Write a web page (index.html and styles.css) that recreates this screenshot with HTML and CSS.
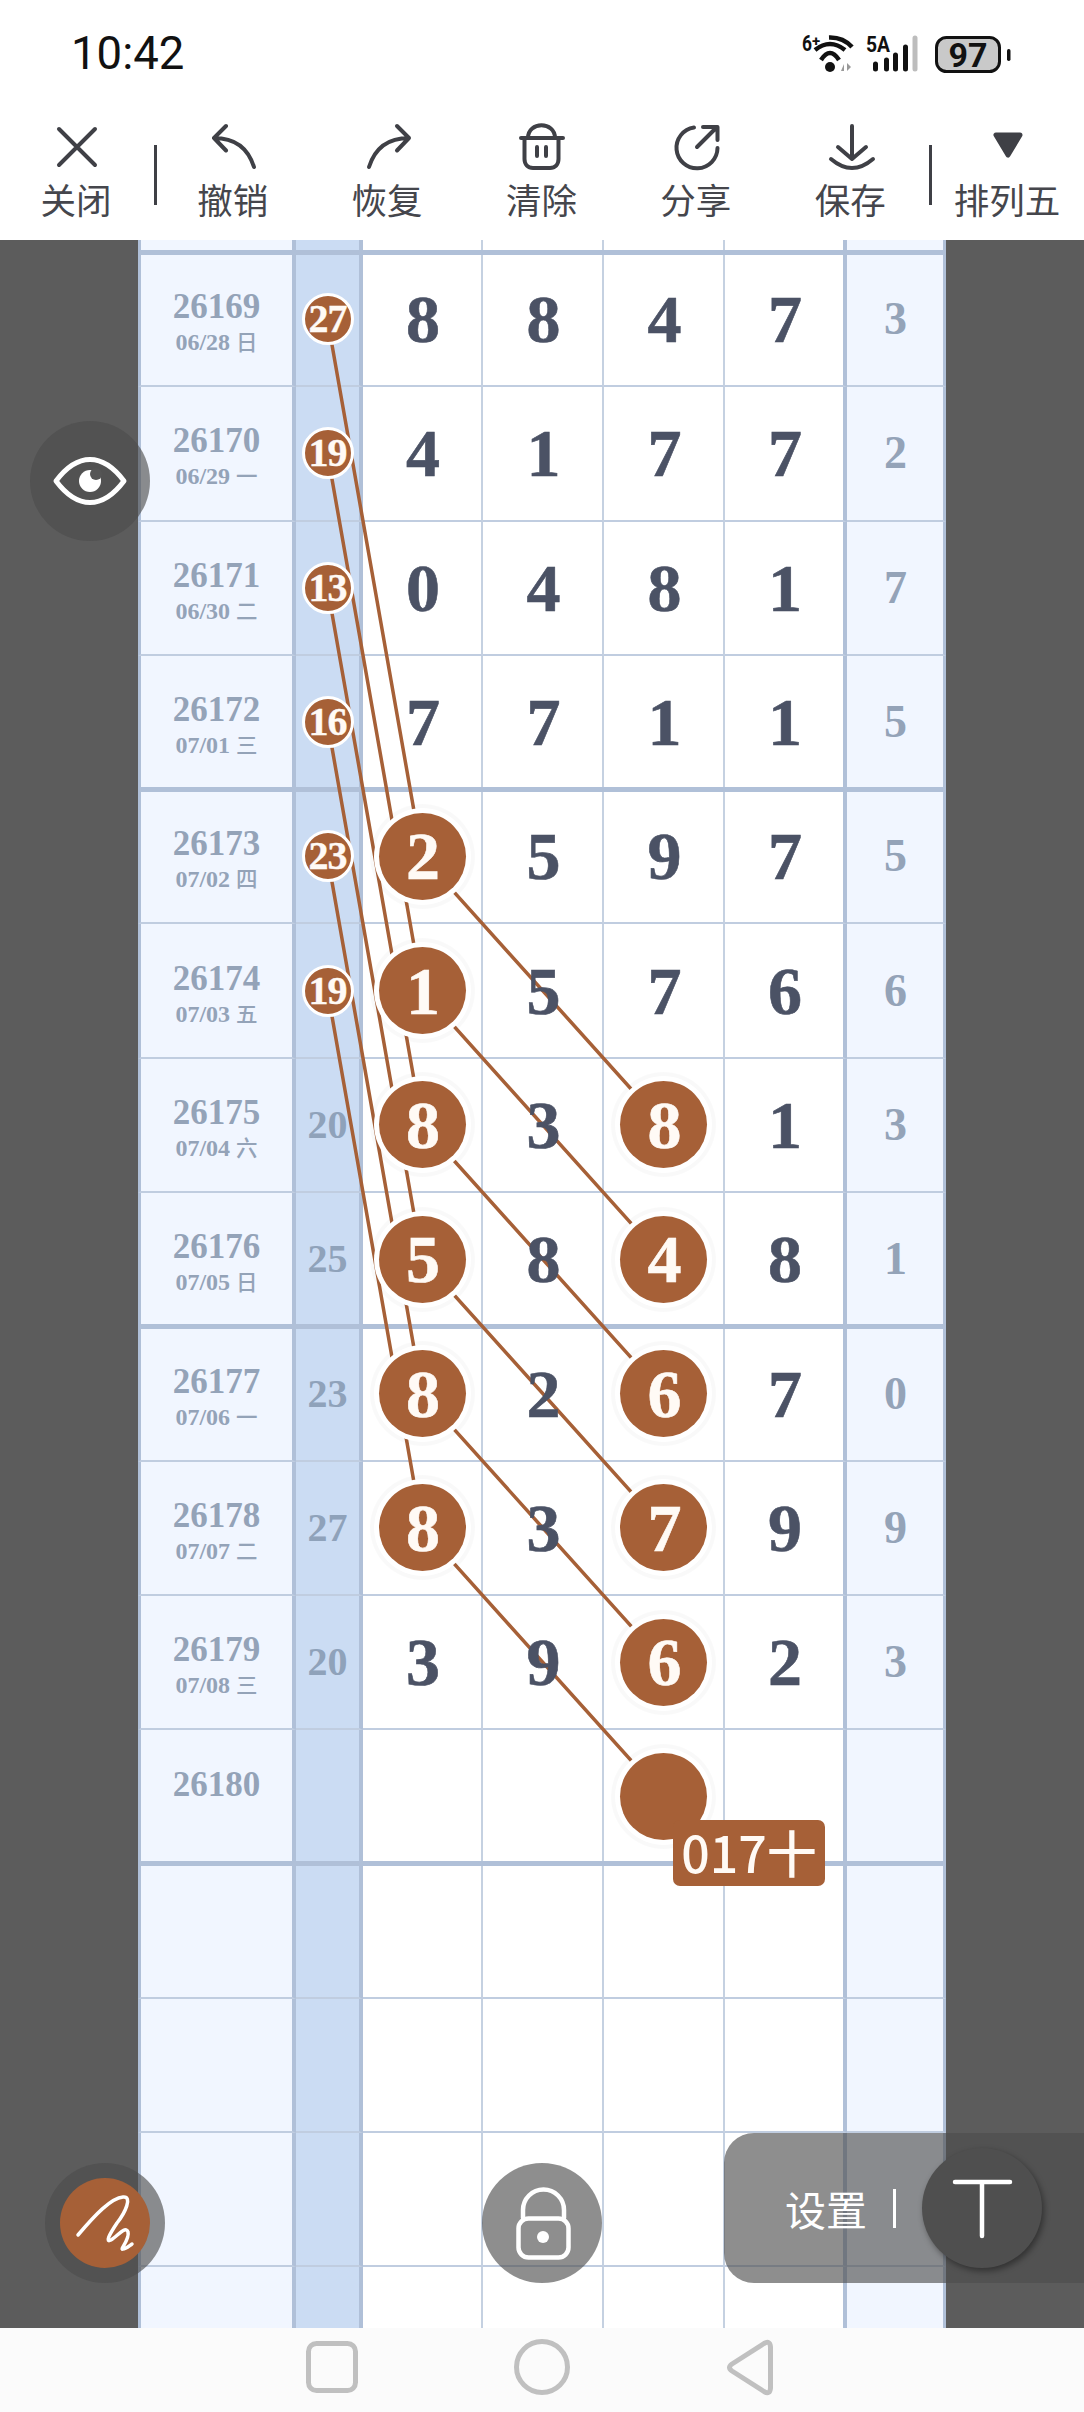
FILE: index.html
```html
<!DOCTYPE html>
<html lang="zh">
<head>
<meta charset="utf-8">
<title>排列五</title>
<link rel="stylesheet" href="styles.css">
</head>
<body>
<div class="page">
  <header class="status">
    <span class="time">10:42</span>
    <svg class="status-icons" viewBox="800 30 215 50" width="215" height="50">
      <text class="st-small" x="802" y="51" textLength="10" lengthAdjust="spacingAndGlyphs">6</text>
      <text class="st-plus" x="812" y="46">+</text>
      <path class="wifi" d="M829 37.500Q843 37 852 47"/>
      <path class="wifi" d="M815 50Q830 38 845 50"/>
      <path class="wifi" d="M821 60Q830 46 839 60"/>
      <circle cx="830" cy="67" r="5" fill="#111"/>
      <path d="M841 71l3-7v7zM847 63v8l4-4z" fill="#999"/>
      <text class="st-small" x="866" y="52" textLength="24" lengthAdjust="spacingAndGlyphs">5A</text>
      <path class="bar" d="M875.500 64V69M886.500 60V69M895.500 55V69M905.500 47V69"/>
      <path class="bar bar-off" d="M915 38V69"/>
      <rect class="batt" x="936.500" y="37.500" width="63" height="34" rx="10"/>
      <text class="batt-text" x="968" y="67" text-anchor="middle">97</text>
      <rect x="1007" y="49" width="3.500" height="12" rx="1.700" fill="#111"/>
    </svg>
  </header>

  <nav class="toolbar">
    <div class="tool tool-first">
      <svg class="ticon" viewBox="0 0 48 48"><path d="M7 7L43 43M43 7L7 43"/></svg>
      <span>关闭</span>
    </div>
    <i class="tsep"></i>
    <div class="tool">
      <svg class="ticon" viewBox="0 0 48 48"><path d="M16 4L4 16L16 28.500M4 16C24 16 38 26 44 45"/></svg>
      <span>撤销</span>
    </div>
    <div class="tool">
      <svg class="ticon" viewBox="0 0 48 48"><path d="M32 4L44 16L32 28.500M44 16C24 16 10 26 4 45"/></svg>
      <span>恢复</span>
    </div>
    <div class="tool">
      <svg class="ticon" viewBox="0 0 48 48"><path d="M2 16H44M9 16C9 -1 36 -1 36 16M5.500 16V37C5.500 42.500 9 46 14 46H31C36 46 39.500 42.500 39.500 37V16M18 25V34M27 25V34"/></svg>
      <span>清除</span>
    </div>
    <div class="tool">
      <svg class="ticon" viewBox="0 0 48 48"><path d="M21 5.500A20.500 20.500 0 1 0 44.500 26M24 25L44 5M30 5H44.500V18"/></svg>
      <span>分享</span>
    </div>
    <div class="tool">
      <svg class="ticon" viewBox="0 0 48 48"><path d="M24 4V37M10 25L24 37L38 25M3 37Q24 55 45 37"/></svg>
      <span>保存</span>
    </div>
    <i class="tsep"></i>
    <div class="tool tool-last">
      <svg class="ticon ticon-solid" viewBox="0 0 48 48"><path d="M12 13H36L24 33Z"/></svg>
      <span>排列五</span>
    </div>
  </nav>

  <main class="stage">
    <section class="sheet">
      <svg class="links" viewBox="0 0 808 2088" width="808" height="2088">
        <path d="M189.500 79.200L284 616.400M189.500 213.500L284 750.700M189.500 347.800L284 885M189.500 482.100L284 1019.300M189.500 616.400L284 1153.600M189.500 750.700L284 1287.900"/>
        <path d="M284 616.400L525.500 885M284 750.700L525.500 1019.300M284 885L525.500 1153.600M284 1019.300L525.500 1287.900M284 1153.600L525.500 1422.200M284 1287.900L525.500 1556.500"/>
      </svg>

      <div class="row row-stub thick"><div class="c c-issue"></div><div class="c c-sum"></div><div class="c"></div><div class="c"></div><div class="c"></div><div class="c c-d4"></div><div class="c c-last"></div></div>

      <div class="row"><div class="c c-issue"><b>26169</b><small>06/28 <em>日</em></small></div><div class="c c-sum"><span class="mini">27</span></div><div class="c"><span class="n">8</span></div><div class="c"><span class="n">8</span></div><div class="c"><span class="n">4</span></div><div class="c c-d4"><span class="n">7</span></div><div class="c c-last"><span class="m">3</span></div></div>
      <div class="row"><div class="c c-issue"><b>26170</b><small>06/29 <em>一</em></small></div><div class="c c-sum"><span class="mini">19</span></div><div class="c"><span class="n">4</span></div><div class="c"><span class="n">1</span></div><div class="c"><span class="n">7</span></div><div class="c c-d4"><span class="n">7</span></div><div class="c c-last"><span class="m">2</span></div></div>
      <div class="row"><div class="c c-issue"><b>26171</b><small>06/30 <em>二</em></small></div><div class="c c-sum"><span class="mini">13</span></div><div class="c"><span class="n">0</span></div><div class="c"><span class="n">4</span></div><div class="c"><span class="n">8</span></div><div class="c c-d4"><span class="n">1</span></div><div class="c c-last"><span class="m">7</span></div></div>
      <div class="row thick"><div class="c c-issue"><b>26172</b><small>07/01 <em>三</em></small></div><div class="c c-sum"><span class="mini">16</span></div><div class="c"><span class="n">7</span></div><div class="c"><span class="n">7</span></div><div class="c"><span class="n">1</span></div><div class="c c-d4"><span class="n">1</span></div><div class="c c-last"><span class="m">5</span></div></div>

      <div class="row"><div class="c c-issue"><b>26173</b><small>07/02 <em>四</em></small></div><div class="c c-sum"><span class="mini">23</span></div><div class="c"><span class="ball">2</span></div><div class="c"><span class="n">5</span></div><div class="c"><span class="n">9</span></div><div class="c c-d4"><span class="n">7</span></div><div class="c c-last"><span class="m">5</span></div></div>
      <div class="row"><div class="c c-issue"><b>26174</b><small>07/03 <em>五</em></small></div><div class="c c-sum"><span class="mini">19</span></div><div class="c"><span class="ball">1</span></div><div class="c"><span class="n">5</span></div><div class="c"><span class="n">7</span></div><div class="c c-d4"><span class="n">6</span></div><div class="c c-last"><span class="m">6</span></div></div>
      <div class="row"><div class="c c-issue"><b>26175</b><small>07/04 <em>六</em></small></div><div class="c c-sum"><span class="s">20</span></div><div class="c"><span class="ball">8</span></div><div class="c"><span class="n">3</span></div><div class="c"><span class="ball">8</span></div><div class="c c-d4"><span class="n">1</span></div><div class="c c-last"><span class="m">3</span></div></div>
      <div class="row thick"><div class="c c-issue"><b>26176</b><small>07/05 <em>日</em></small></div><div class="c c-sum"><span class="s">25</span></div><div class="c"><span class="ball">5</span></div><div class="c"><span class="n">8</span></div><div class="c"><span class="ball">4</span></div><div class="c c-d4"><span class="n">8</span></div><div class="c c-last"><span class="m">1</span></div></div>

      <div class="row"><div class="c c-issue"><b>26177</b><small>07/06 <em>一</em></small></div><div class="c c-sum"><span class="s">23</span></div><div class="c"><span class="ball">8</span></div><div class="c"><span class="n">2</span></div><div class="c"><span class="ball">6</span></div><div class="c c-d4"><span class="n">7</span></div><div class="c c-last"><span class="m">0</span></div></div>
      <div class="row"><div class="c c-issue"><b>26178</b><small>07/07 <em>二</em></small></div><div class="c c-sum"><span class="s">27</span></div><div class="c"><span class="ball">8</span></div><div class="c"><span class="n">3</span></div><div class="c"><span class="ball">7</span></div><div class="c c-d4"><span class="n">9</span></div><div class="c c-last"><span class="m">9</span></div></div>
      <div class="row"><div class="c c-issue"><b>26179</b><small>07/08 <em>三</em></small></div><div class="c c-sum"><span class="s">20</span></div><div class="c"><span class="n">3</span></div><div class="c"><span class="n">9</span></div><div class="c"><span class="ball">6</span></div><div class="c c-d4"><span class="n">2</span></div><div class="c c-last"><span class="m">3</span></div></div>
      <div class="row thick"><div class="c c-issue"><b>26180</b><small>&nbsp;</small></div><div class="c c-sum"></div><div class="c"></div><div class="c"></div><div class="c"><span class="ball"><span class="tag">017十</span></span></div><div class="c c-d4"></div><div class="c c-last"></div></div>

      <div class="row"><div class="c c-issue"></div><div class="c c-sum"></div><div class="c"></div><div class="c"></div><div class="c"></div><div class="c c-d4"></div><div class="c c-last"></div></div>
      <div class="row"><div class="c c-issue"></div><div class="c c-sum"></div><div class="c"></div><div class="c"></div><div class="c"></div><div class="c c-d4"></div><div class="c c-last"></div></div>
      <div class="row"><div class="c c-issue"></div><div class="c c-sum"></div><div class="c"></div><div class="c"></div><div class="c"></div><div class="c c-d4"></div><div class="c c-last"></div></div>
      <div class="row"><div class="c c-issue"></div><div class="c c-sum"></div><div class="c"></div><div class="c"></div><div class="c"></div><div class="c c-d4"></div><div class="c c-last"></div></div>
    </section>

    <button class="fab fab-eye" type="button">
      <svg viewBox="0 0 120 120" width="120" height="120">
        <path class="line-w" d="M26 60C38 44 49 38.500 60 38.500C71 38.500 82 44 94 60C82 76 71 81.500 60 81.500C49 81.500 38 76 26 60Z"/>
        <circle cx="60" cy="60" r="11" fill="#fff"/>
        <circle cx="66" cy="53" r="6" fill="#555"/>
      </svg>
    </button>
    <button class="fab fab-pen" type="button">
      <svg viewBox="0 0 120 120" width="120" height="120">
        <circle cx="60" cy="60" r="45" fill="#a66037"/>
        <path class="line-w line-pen" d="M33 72C50 52 66 35 78 34C88 33 80 50 72 60C64 72 60 80 66 77C72 74 80 62 83 69C85 76 74 88 78 86C81 86 84 83 87 81"/>
      </svg>
    </button>
    <button class="fab fab-lock" type="button">
      <svg viewBox="0 0 120 120" width="120" height="120">
        <path class="line-w line-thin" d="M41 55V47A20.500 20.500 0 0 1 82 47V55"/>
        <rect class="line-w line-thin" x="36.500" y="55.500" width="50" height="39" rx="10"/>
        <circle cx="61" cy="74" r="6" fill="#fff"/>
      </svg>
    </button>

    <div class="panel">
      <span class="panel-text">设置</span>
      <i class="panel-sep"></i>
      <span class="panel-t">
        <svg viewBox="0 0 120 120" width="120" height="120">
          <path class="line-w line-thin" d="M33 34H88M60 34V88"/>
        </svg>
      </span>
    </div>
  </main>

  <footer class="nav">
    <svg viewBox="0 0 52 52" width="52" height="52"><rect x="2.500" y="2.500" width="47" height="47" rx="8"/></svg>
    <svg viewBox="0 0 56 56" width="56" height="56"><circle cx="28" cy="28" r="25.500"/></svg>
    <svg viewBox="0 0 47 57" width="47" height="57"><path d="M38 4.500Q44 1 44.500 8V49Q44 56 38 52.500L6 32Q1 28.500 6 25Z"/></svg>
  </footer>
</div>
</body>
</html>
```

FILE: styles.css
```css
* { box-sizing: border-box; }

html, body { margin: 0; padding: 0; }

body {
  width: 1084px;
  height: 2412px;
  overflow: hidden;
  background: #fff;
  font-family: "Noto Sans CJK SC", "Noto Sans", sans-serif;
}

.page {
  display: flex;
  flex-direction: column;
  width: 1084px;
  height: 2412px;
}

/* status bar */
.status {
  flex: 0 0 100px;
  display: flex;
  justify-content: space-between;
  align-items: flex-start;
  padding: 31px 69px 0 71px;
}

.time {
  font: 400 45.5px/45px Roboto, sans-serif;
  color: #111;
}

.status-icons { margin-top: -1px; }

.st-small { font: 700 22px Roboto, sans-serif; fill: #111; }
.st-plus { font: 700 15px Roboto, sans-serif; fill: #111; }
.wifi { fill: none; stroke: #111; stroke-width: 4.5; }
.bar { fill: none; stroke: #111; stroke-width: 5; stroke-linecap: round; }
.bar-off { stroke: #bdbdbd; }
.batt { fill: #c9c9c9; stroke: #111; stroke-width: 3; }
.batt-text { font: 700 34px Roboto, sans-serif; fill: #111; }

/* toolbar */
.toolbar {
  flex: 0 0 140px;
  display: flex;
  align-items: flex-start;
  background: #fff;
}

.tool {
  flex: 0 0 154.4px;
  display: flex;
  flex-direction: column;
  align-items: center;
  padding-top: 22px;
  color: #45464c;
  font-size: 35.5px;
  line-height: 48px;
}

.tool span { margin-left: -3px; }

.tool-first { flex-basis: 154px; padding-right: 2px; }
.tool-first span { margin-left: 0; }
.tool-last { flex-basis: 153px; }

.ticon {
  width: 48px;
  height: 48px;
  margin-bottom: 5px;
  overflow: visible;
  fill: none;
  stroke: #3f4046;
  stroke-width: 4;
  stroke-linecap: round;
  stroke-linejoin: round;
}

.ticon-solid { fill: #3f4046; stroke-width: 5; }

.tsep {
  flex: 0 0 3px;
  height: 60px;
  margin-top: 45px;
  background: #3f4046;
}

/* stage and sheet */
.stage {
  position: relative;
  flex: 1 1 auto;
  min-height: 0;
  overflow: hidden;
  background: #5c5c5c;
}

.sheet {
  position: relative;
  width: 808px;
  height: 100%;
  margin-left: 138px;
  overflow: hidden;
  background: #fff;
}

.links {
  position: absolute;
  left: 0;
  top: 0;
  z-index: 2;
  fill: none;
  stroke: #a66037;
  stroke-width: 3.5;
}

.row {
  position: relative;
  display: grid;
  grid-template-columns: 158px 67px 120px 121px 121px 122px 99px;
  height: 134.3px;
}

.row-stub { height: 13px; }

.row.thick::after {
  content: "";
  position: absolute;
  z-index: 1;
  left: 0;
  right: 0;
  bottom: -1.5px;
  height: 5px;
  background: #b0c0d8;
}

.c {
  display: flex;
  align-items: center;
  justify-content: center;
  border-right: 2px solid #c5d1e1;
  border-bottom: 2px solid #c0cde0;
}

.c-issue {
  flex-direction: column;
  padding-top: 5px;
  background: #f1f6ff;
  border-left: 3px solid #b0c0d8;
  border-right: 4px solid #b0c0d8;
}

.c-sum {
  background: #cbdcf3;
  border-right: 4px solid #b0c0d8;
}

.c-d4 { border-right: 4px solid #b0c0d8; }

.c-last {
  background: #f1f6ff;
  border-right: 3px solid #b0c0d8;
}

.c-issue b,
.c-issue small,
.n, .m, .s, .mini, .ball {
  font-family: "Liberation Serif", serif;
  font-weight: 700;
}

.c-issue b {
  font-size: 35px;
  line-height: 40px;
  color: #94a3b8;
}

.c-issue small {
  font-size: 24px;
  line-height: 28px;
  color: #94a3b8;
}

.c-issue em {
  font-family: "Noto Sans CJK SC", sans-serif;
  font-style: normal;
  font-weight: 500;
  font-size: 21.5px;
}

.n {
  position: relative;
  z-index: 3;
  padding-left: 2px;
  font-size: 68px;
  line-height: 1;
  color: #4b5265;
  -webkit-text-stroke: 0.6px #4b5265;
}

.m {
  position: relative;
  z-index: 3;
  padding-left: 1px;
  font-size: 46px;
  line-height: 1;
  color: #94a3b8;
}

.s {
  position: relative;
  z-index: 3;
  font-size: 40px;
  line-height: 1;
  color: #8fa2ba;
}

.mini {
  position: relative;
  z-index: 3;
  display: flex;
  align-items: center;
  justify-content: center;
  width: 52px;
  height: 52px;
  border: 3px solid #fff;
  border-radius: 50%;
  background: #a66037;
  color: #fffaf5;
  font-size: 40px;
  line-height: 1;
  letter-spacing: -1px;
  -webkit-text-stroke: 0.4px #fffaf5;
}

.ball {
  position: relative;
  z-index: 3;
  display: flex;
  align-items: center;
  justify-content: center;
  width: 87px;
  height: 87px;
  padding-left: 2px;
  border-radius: 50%;
  background: #a66037;
  box-shadow: 0 0 0 5px #fff, 0 0 0 9px rgba(0, 0, 0, 0.025);
  color: #fffaf5;
  font-size: 68px;
  line-height: 1;
  -webkit-text-stroke: 0.6px #fffaf5;
}

.tag {
  position: absolute;
  left: 53px;
  top: 67px;
  width: 152px;
  height: 66px;
  border-radius: 7px;
  background: #a66037;
  color: #fffaf5;
  font: 500 50px/62px "Noto Sans CJK SC", sans-serif;
  text-align: center;
  white-space: nowrap;
  -webkit-text-stroke: 0;
}

/* floating controls */
.fab {
  position: absolute;
  z-index: 4;
  width: 120px;
  height: 120px;
  padding: 0;
  border: 0;
  border-radius: 50%;
  background: rgba(76, 76, 76, 0.63);
}

.fab svg { display: block; }

.fab-eye { left: 30px; top: 181px; }
.fab-pen { left: 45px; top: 1923px; }
.fab-lock { left: 482px; top: 1923px; }

.line-w {
  fill: none;
  stroke: #fff;
  stroke-width: 5;
  stroke-linecap: round;
  stroke-linejoin: round;
}

.line-thin { stroke-width: 4.5; }
.line-pen { stroke-width: 3.5; }

.panel {
  position: absolute;
  z-index: 4;
  right: 0;
  top: 1893px;
  display: flex;
  align-items: center;
  width: 360px;
  height: 150px;
  padding-left: 61px;
  border-radius: 30px 0 0 30px;
  background: rgba(76, 76, 76, 0.63);
}

.panel-text {
  color: #fff;
  font-size: 41px;
  line-height: 1;
}

.panel-sep {
  flex: 0 0 3px;
  height: 39px;
  margin-left: 26px;
  background: #fff;
}

.panel-t {
  flex: 0 0 120px;
  height: 120px;
  margin-left: 26px;
  border-radius: 50%;
  background: #4f4f4f;
  box-shadow: 2px 3px 6px rgba(0, 0, 0, 0.4);
}

.panel-t svg { display: block; }

/* system nav */
.nav {
  flex: 0 0 84px;
  display: flex;
  align-items: center;
  gap: 156px;
  padding: 0 0 6px 306px;
  background: #fbfbfb;
}

.nav svg {
  fill: none;
  stroke: #c0c0c0;
  stroke-width: 5;
  stroke-linejoin: round;
}
```
